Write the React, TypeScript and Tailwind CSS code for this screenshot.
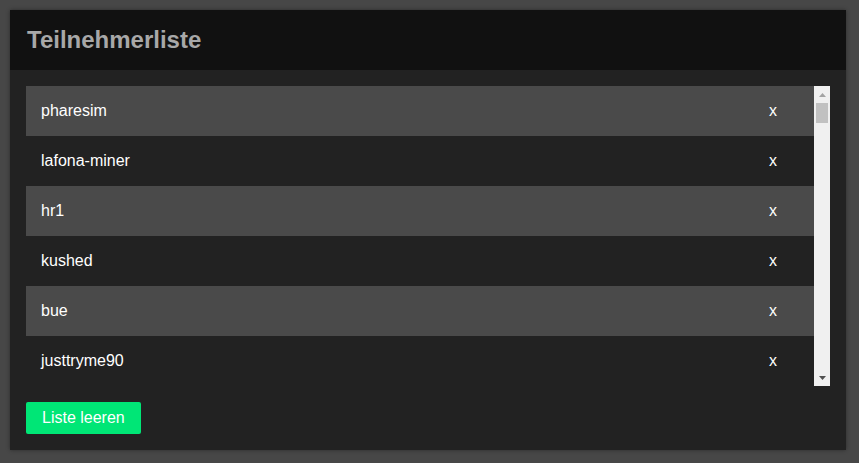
const participants = ["pharesim", "lafona-miner", "hr1", "kushed", "bue", "justtryme90"];

const App = () => {
    return (
        <main className="w-[859px] h-[463px] bg-[#474747] p-[10px] pr-[13px] pb-[13px]" style={{ fontFamily: '"Liberation Sans", Arial, sans-serif' }}>
            <div className="flex flex-col w-[836px] h-[440px] bg-[#222222] shadow-[0_0_4px_rgba(0,0,0,0.4)]">
                <header className="flex items-center h-[60px] bg-[#111111] px-[17px]">
                    <h1 className="text-[24px] font-bold text-[#a8a8a8]">Teilnehmerliste</h1>
                </header>
                <div className="flex flex-col gap-4 p-4">
                    <div className="flex h-[300px]">
                        <ul className="flex-1 flex flex-col overflow-hidden">
                            {participants.map((name, i) => (
                                <li key={name} className={`flex justify-between items-center h-[50px] shrink-0 pl-[15px] pr-[37px] text-[16px] text-white ${i % 2 === 0 ? "bg-[#4a4a4a]" : "bg-[#222222]"}`}>
                                    <span>{name}</span>
                                    <button type="button" className="text-white">x</button>
                                </li>
                            ))}
                        </ul>
                        <div className="flex flex-col w-[16px] bg-[#f0f0f0]">
                            <div className="flex justify-center items-center h-[17px]">
                                <svg width="7" height="4" viewBox="0 0 7 4"><path d="M0 4 L3.5 0 L7 4 Z" fill="#a3a3a3" /></svg>
                            </div>
                            <div className="flex-1 px-[2px]">
                                <div className="h-[20px] bg-[#c1c1c1]" />
                            </div>
                            <div className="flex justify-center items-center h-[17px]">
                                <svg width="7" height="4" viewBox="0 0 7 4"><path d="M0 0 L3.5 4 L7 0 Z" fill="#505050" /></svg>
                            </div>
                        </div>
                    </div>
                    <div>
                        <button type="button" className="h-[32px] px-[16px] bg-[#00e676] text-white text-[16px] rounded-[2px]">Liste leeren</button>
                    </div>
                </div>
            </div>
        </main>
    );
};

export default App;
